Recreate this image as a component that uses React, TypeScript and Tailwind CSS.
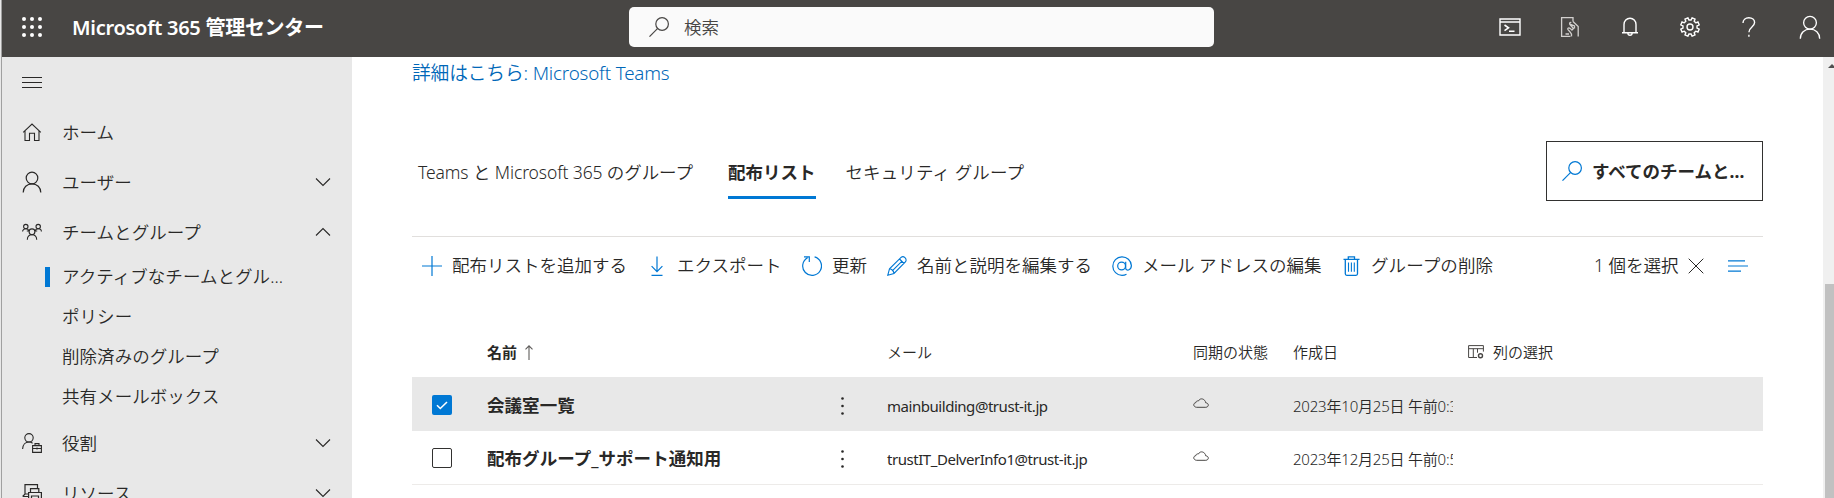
import type { ReactNode } from 'react';

type IconProps = { className?: string; children?: ReactNode; w: number; h: number; sw?: number };

function Icon({ w, h, sw = 1.1, className = '', children }: IconProps) {
  return (
    <svg
      width={w}
      height={h}
      viewBox={`0 0 ${w} ${h}`}
      fill="none"
      stroke="currentColor"
      strokeWidth={sw}
      className={`block shrink-0 ${className}`}
    >
      {children}
    </svg>
  );
}

const Waffle = () => (
  <Icon w={20} h={20} className="text-white">
    {[2, 10, 18].map((y) =>
      [2, 10, 18].map((x) => <circle key={`${x}-${y}`} cx={x} cy={y} r={2} fill="currentColor" stroke="none" />),
    )}
  </Icon>
);

const Person = ({ className = '', size = 20 }: { className?: string; size?: number }) => (
  <svg
    width={size}
    height={size * 1.1}
    viewBox="0 0 20 22"
    fill="none"
    stroke="currentColor"
    strokeWidth={1.2}
    className={`block shrink-0 ${className}`}
  >
    <circle cx={10} cy={7} r={5.8} />
    <path d="M1.2 21.5C1.2 16.4 5 12.8 10 12.8S18.8 16.4 18.8 21.5" />
  </svg>
);

const Search = ({ className = '' }: { className?: string }) => (
  <Icon w={20} h={20} sw={1.2} className={className}>
    <circle cx={13.1} cy={7} r={6.3} />
    <path d="M8.7 11.4.5 19.6" />
  </Icon>
);

const Home = () => (
  <Icon w={20} h={20} sw={1.1}>
    <path d="M1.200 10.400 10 2l8.800 8.400M3 8.800v9.700h4.500v-7.200h5v7.200H17V8.800" />
  </Icon>
);

const Teams = () => (
  <Icon w={20} h={20}>
    <circle cx={3.8} cy={4.600} r={2.200} />
    <circle cx={16.200} cy={4.600} r={2.200} />
    <circle cx={10} cy={9.800} r={2.900} />
    <path d="M.6 9.600C.6 7.900 2 6.800 3.800 6.800c1.600 0 2.800.8 3.200 2M19.400 9.600c0-1.700-1.400-2.800-3.200-2.800-1.600 0-2.800.8-3.200 2M5.300 17.800c0-3 1.900-5.100 4.700-5.100s4.700 2.100 4.700 5.100M7.100 9H4.800M12.900 9h2.300" />
  </Icon>
);

const Roles = () => (
  <Icon w={20} h={20}>
    <circle cx={7} cy={4.800} r={4.200} />
    <path d="M.6 16C.8 11.800 3.400 9 7 9c1.600 0 2.600.4 3.600 1.200M10.600 12.600h8.800v6.800h-8.800zM10.600 15.500h8.800M13 12.600v-2h4v2M15 14.500v2" />
  </Icon>
);

const Resources = () => (
  <Icon w={20} h={20} sw={1.2}>
    <path d="M3 11V1.600h12.500v4M.6 13.500 3 11h3M.6 13.500H6M8.500 9V5.600h8.300V9M6.600 9.500h12.800v6.500H6.600zM9.500 13h7v6h-7z" />
  </Icon>
);

const Chevron = ({ up = false }: { up?: boolean }) => (
  <Icon w={16} h={10} sw={1.1}>
    <path d={up ? 'M1 8.500 8 1.500l7 7' : 'M1 1.500l7 7 7-7'} />
  </Icon>
);

const Terminal = () => (
  <Icon w={22} h={18} sw={1.4}>
    <path d="M1 1h20v16H1zM1 4h20" />
    <path d="M5.500 7 9.500 9.800l-4 2.800M10 13.300h5.500" strokeWidth={1.6} />
  </Icon>
);

const PhoneHand = () => (
  <Icon w={20} h={20} sw={1.300} className="text-[#d2d0ce]">
    <path d="M13 4.500V.6H1.600v18.800h8.900M5.500 17h3.500" />
    <path d="M11.500 19.400c.3-2 .2-3-1.200-4.200L8 12.600c-.8-1.100.5-2.200 1.500-1.500l2 1.500M14.500 11.500V8.900L10 7.200c-1-1 .2-2.300 1.300-1.600M13 4.500 18.200 9.500v9.900M9.500 7l4 4.500-2 2" />
  </Icon>
);

const Bell = () => (
  <Icon w={18} h={20} sw={1.400}>
    <path d="M1 15.700h16M3 15.700V7.500a6 6.300 0 0 1 12 0v8.200M6.800 16c.2 3 4.200 3 4.400 0" />
  </Icon>
);

const GEAR_TEETH = Array.from({ length: 8 }, (_, i) => {
  const base = (i * Math.PI) / 4 - Math.PI / 8;
  return [
    [-0.24, 7.1],
    [-0.17, 9.4],
    [0.17, 9.4],
    [0.24, 7.1],
  ]
    .map(([da, r]) => `${(10 + r * Math.cos(base + da)).toFixed(2)},${(10 + r * Math.sin(base + da)).toFixed(2)}`)
    .join(' ');
}).join(' ');

const Gear = () => (
  <Icon w={20} h={20} sw={1.400}>
    <polygon points={GEAR_TEETH} />
    <circle cx={10} cy={10} r={3} />
  </Icon>
);

const Help = () => (
  <Icon w={14} h={20} sw={1.400}>
    <path d="M1 6C1 2.800 3.400.7 6.800.7s5.800 2 5.800 4.900c0 4.400-5.700 4.500-5.700 9.700M6.900 17.800v2" />
  </Icon>
);

const Plus = () => (
  <Icon w={20} h={20} sw={1.200}>
    <path d="M10 0v20M0 10h20" />
  </Icon>
);
const Download = () => (
  <Icon w={12} h={20} sw={1.200}>
    <path d="M6 .5v15M.6 10.200 6 15.600l5.400-5.400M.5 19.400h11" />
  </Icon>
);
const Refresh = () => (
  <Icon w={20} h={20} sw={1.200}>
    <path d="M12.600.9A9.400 9.400 0 1 1 5.600 1.700M2 .8h5.300v5.300" />
  </Icon>
);
const Pencil = () => (
  <Icon w={20} h={20} sw={1.100}>
    <path d="M.8 19.200l1.700-6.400L14.300 1.200c2.300-1.700 6 1.600 4.300 4.500L7 17.500zM12.500 3l4.500 4.500M2.500 12.800c2.500.3 4.100 2 4.500 4.700M5 15.200 14.800 5.300" />
  </Icon>
);
const At = () => (
  <Icon w={20} h={20} sw={1.200}>
    <circle cx={9.600} cy={10} r={3.900} />
    <path d="M13.700 5.800v6.500c0 2.900 5.700 2.500 5.700-2.700A9.300 9.300 0 1 0 10 19.400c1.800 0 3.200-.4 4.500-1.100" />
  </Icon>
);
const Trash = () => (
  <Icon w={17} h={20} sw={1.300}>
    <path d="M.5 3.300h16M5.300 3V.8h6.200V3M2.300 3.300v14.500c0 1 .5 1.500 1.500 1.500H13c1 0 1.500-.5 1.500-1.500V3.300" />
    <path d="M5.500 6.500v9.300M8.400 6.500v9.300M11.300 6.500v9.300" strokeWidth={1.1} />
  </Icon>
);
const Cloud = () => (
  <Icon w={16} h={10} sw={1} className="text-[#484644]">
    <path d="M3.600 9.300h9.200c3.400-.2 3.300-4.300-.1-4.500C12.300 1 7.300-.8 5.500 2.900 3.800 2.700 2.900 3.500 2.900 4.600-.2 5.100.1 9 3.600 9.300z" />
  </Icon>
);
const Columns = () => (
  <Icon w={16} h={14} sw={1} className="text-[#484644]">
    <path d="M9 12.500H.6V.6h14.800v6M.6 3.700h14.800M5.300 3.700v8.800M9.500 3.700v4" />
    <circle cx={12.500} cy={10.800} r={2} strokeWidth={1.400} />
  </Icon>
);

function NavRow({ icon, label, chevron }: { icon: ReactNode; label: string; chevron?: 'up' | 'down' }) {
  return (
    <li className="flex h-[50px] shrink-0 items-center pl-5 pr-[21px]">
      <span className="flex w-10 items-center">{icon}</span>
      <span className="flex-1">{label}</span>
      {chevron && <Chevron up={chevron === 'up'} />}
    </li>
  );
}

function SubRow({ label, active = false }: { label: string; active?: boolean }) {
  return (
    <li className="flex h-10 shrink-0 items-center pl-[43px]">
      <span className={active ? 'h-5 w-[5px] bg-[#0078d4]' : 'h-5 w-[5px]'} />
      <span className="pb-px pl-3">{label}</span>
    </li>
  );
}

function Command({ icon, label, className }: { icon: ReactNode; label: string; className: string }) {
  return (
    <button className={`flex shrink-0 items-center whitespace-nowrap ${className}`}>
      <span className="text-[#0078d4]">{icon}</span>
      <span>{label}</span>
    </button>
  );
}

const GRID = 'grid grid-cols-[75px_355px_45px_306px_100px_160px_1fr] items-center';

function Row({ checked = false, name, mail, date }: { checked?: boolean; name: string; mail: string; date: string }) {
  return (
    <div
      className={`${GRID} h-[54px] shrink-0 border-b ${
        checked ? 'border-[#e8e8e8] bg-[#e8e8e8] pt-[3px]' : 'border-[#edebe9] pt-px'
      }`}
    >
      <div className="pl-5">
        {checked ? (
          <span className="flex size-5 items-center justify-center rounded-[2px] bg-[#0078d4] text-white">
            <Icon w={12} h={9} sw={1.600}>
              <path d="M1 4.300 4.300 7.500 11 1" />
            </Icon>
          </span>
        ) : (
          <span className="block size-5 rounded-[2px] border border-[#323130] bg-white" />
        )}
      </div>
      <div className="text-[17.5px] font-bold tracking-[0.05px]">{name}</div>
      <div className="-ml-px pt-px">
        <Icon w={3} h={18}>
          {[1.5, 9, 16.5].map((y) => (
            <circle key={y} cx={1.500} cy={y} r={1.300} fill="currentColor" stroke="none" />
          ))}
        </Icon>
      </div>
      <div className="pt-0.5 font-normal tracking-[-0.46px]">{mail}</div>
      <div className="pb-1">
        <Cloud />
      </div>
      <div className="overflow-hidden whitespace-nowrap pt-0.5 tracking-[-0.2px]">{date}</div>
    </div>
  );
}

export default function App() {
  return (
    <div className="flex h-[498px] w-[1834px] overflow-hidden bg-white font-['Noto_Sans','Noto_Sans_CJK_JP',sans-serif] text-[17.5px] font-[350] leading-normal text-[#292827]">
      <div className="w-0.5 shrink-0 border-r border-[#a0a0a0] bg-[#e8e8e8]" />
      <div className="flex min-w-0 flex-1 flex-col">
        <header className="flex h-[57px] shrink-0 items-center bg-[#484644] pl-5 text-white">
          <div className="pb-1">
            <Waffle />
          </div>
          <h1 className="ml-[30px] w-[557px] whitespace-nowrap pb-0.5 text-[20px] font-semibold tracking-[-0.28px]">
            Microsoft 365 管理センター
          </h1>
          <div className="mb-[3px] flex h-10 w-[585px] items-center gap-[15px] rounded-[5px] bg-[#fafafa] pl-5 text-[#484644]">
            <Search />
            <span>検索</span>
          </div>
          <div className="mb-[3px] flex flex-1 items-center pl-[285px]">
            <Terminal />
            <span className="ml-[39px]"><PhoneHand /></span>
            <span className="ml-[41px]"><Bell /></span>
            <span className="ml-[41px]"><Gear /></span>
            <span className="ml-[42px]"><Help /></span>
            <Person className="ml-[43px]" size={22} />
          </div>
        </header>

        <div className="flex min-h-0 flex-1">
          <nav className="w-[350px] shrink-0 overflow-hidden bg-[#e8e8e8]">
            <div className="flex h-[50px] items-center pl-5">
              <Icon w={20} h={12}>
                <path d="M0 1.500h20M0 6.500h20M0 11.500h20" />
              </Icon>
            </div>
            <ul className="flex flex-col tracking-[0.05px]">
              <NavRow icon={<Home />} label="ホーム" />
              <NavRow icon={<Person size={20} />} label="ユーザー" chevron="down" />
              <NavRow icon={<Teams />} label="チームとグループ" chevron="up" />
              <SubRow label="アクティブなチームとグル..." active />
              <SubRow label="ポリシー" />
              <SubRow label="削除済みのグループ" />
              <SubRow label="共有メールボックス" />
              <li className="h-px" />
              <NavRow icon={<Roles />} label="役割" chevron="down" />
              <NavRow icon={<Resources />} label="リソース" chevron="down" />
            </ul>
          </nav>

          <main className="flex min-w-0 flex-1 flex-col overflow-hidden pl-[60px] pr-[60px]">
            <a className="flex h-8 items-center text-[18.75px] tracking-[-0.16px] text-[#0067b8]">
              詳細はこちら: Microsoft Teams
            </a>

            <div className="mt-[52px] flex h-[60px] shrink-0 items-start pl-1.5">
              <span className="w-[310px] whitespace-nowrap pt-[18px] tracking-[-0.1px]">
                Teams と Microsoft 365 のグループ
              </span>
              <span className="h-[58px] border-b-[3px] border-[#0078d4] pt-[18px] font-bold">配布リスト</span>
              <span className="ml-[30px] pt-[18px] tracking-[0.1px]">セキュリティ グループ</span>
              <button className="ml-auto flex h-[60px] w-[217px] items-center gap-[10px] border border-[#323130] pl-[15px] font-bold">
                <Search className="text-[#0078d4]" />
                <span className="whitespace-nowrap">すべてのチームと...</span>
              </button>
            </div>

            <div className="mt-[35px] flex h-[58px] shrink-0 items-center border-t border-[#e1dfdd] pl-2.5">
              <Command icon={<Plus />} label="配布リストを追加する" className="w-[229px] gap-2.5" />
              <Command icon={<Download />} label="エクスポート" className="w-[151px] gap-3.5" />
              <Command icon={<Refresh />} label="更新" className="w-[85px] gap-2.5" />
              <Command icon={<Pencil />} label="名前と説明を編集する" className="w-[225px] gap-2.5" />
              <Command icon={<At />} label="メール アドレスの編集" className="w-[231px] gap-2.5" />
              <Command icon={<Trash />} label="グループの削除" className="w-[251px] gap-[11px] tracking-[0.1px]" />
              <span className="w-[94px] whitespace-nowrap">1 個を選択</span>
              <Icon w={16} h={16} sw={1}>
                <path d="M.7.7l14.600 14.600M15.300.7.7 15.300" />
              </Icon>
              <Icon w={20} h={12} sw={1.200} className="ml-6 text-[#0078d4]">
                <path d="M0 .8h17M0 6h20M0 11.200h13" />
              </Icon>
            </div>

            <div className="flex flex-col text-[15px]">
              <div className={`${GRID} mt-[33px] h-[50px] shrink-0`}>
                <span />
                <span className="flex items-center gap-[8px] font-bold">
                  名前
                  <Icon w={8} h={15} className="text-[#605e5c]">
                    <path d="M4 .8V15M.5 4.300 4 .8l3.500 3.500" />
                  </Icon>
                </span>
                <span />
                <span>メール</span>
                <span>同期の状態</span>
                <span>作成日</span>
                <span className="flex items-center gap-[9px] pl-[15px]">
                  <Columns />
                  列の選択
                </span>
              </div>
              <Row checked name="会議室一覧" mail="mainbuilding@trust-it.jp" date="2023年10月25日 午前0:35" />
              <Row name="配布グループ_サポート通知用" mail="trustIT_DelverInfo1@trust-it.jp" date="2023年12月25日 午前0:53" />
            </div>
          </main>

          <div className="flex w-[11px] shrink-0 flex-col items-end bg-[#f0f0f0]">
            <Icon w={6} h={4} className="mt-[7px] text-[#505050]">
              <path d="M0 4 4 0l4 4z" fill="currentColor" stroke="none" />
            </Icon>
            <div className="mt-[216px] w-[9px] flex-1 bg-[#c1c1c1]" />
          </div>
        </div>
      </div>
    </div>
  );
}
